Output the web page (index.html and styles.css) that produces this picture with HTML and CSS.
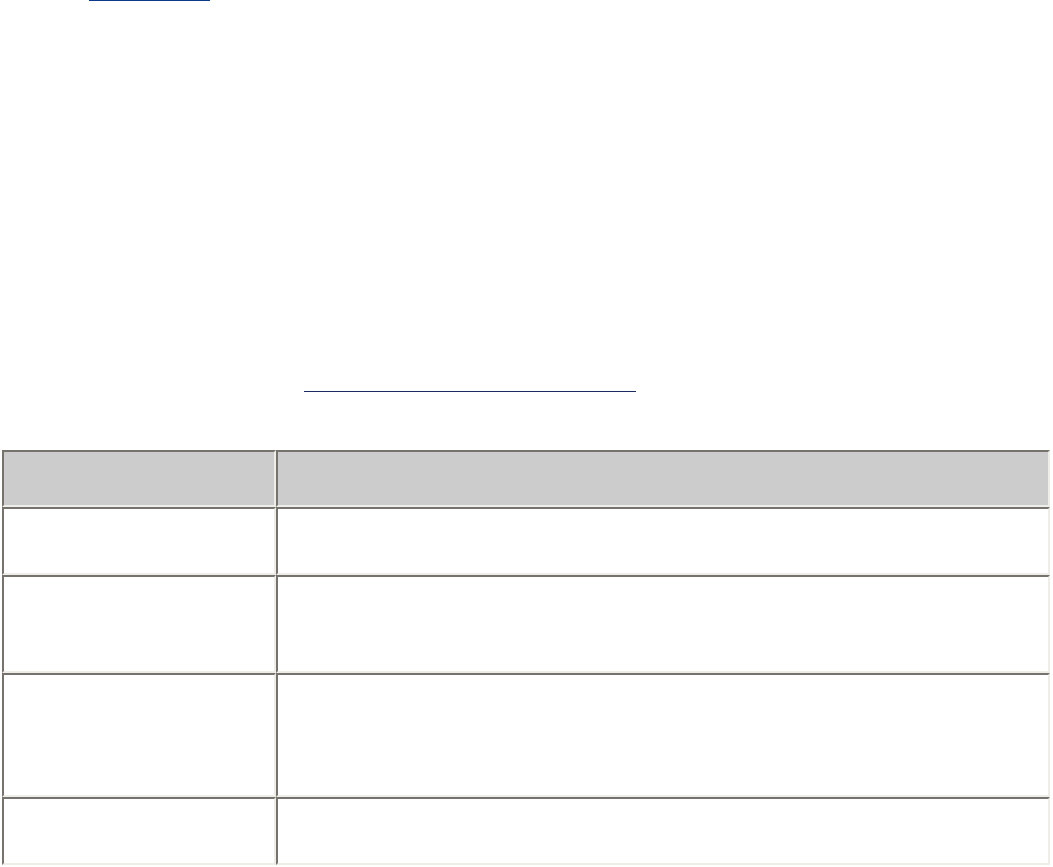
FILE: index.html
```html
<!DOCTYPE html>
<html>
<head>
<meta charset="utf-8">
<link rel="stylesheet" href="styles.css">
</head>
<body>
<div class="top"><a class="toplink" href="#"></a></div>
<div class="mid"><a class="midlink" href="#"></a></div>
<table class="grid">
  <tr class="r1"><th class="c1"></th><th class="c2"></th></tr>
  <tr class="r2"><td class="c1"></td><td class="c2"></td></tr>
  <tr class="r3"><td class="c1"></td><td class="c2"></td></tr>
  <tr class="r4"><td class="c1"></td><td class="c2"></td></tr>
  <tr class="r5"><td class="c1"></td><td class="c2"></td></tr>
</table>
</body>
</html>
```

FILE: styles.css
```css
html, body {
  margin: 0;
  padding: 0;
  background: #ffffff;
  font-family: "Liberation Serif", serif;
}
.top {
  height: 1px;
  padding-left: 89px;
  display: flex;
}
.toplink {
  display: block;
  width: 121px;
  height: 1px;
  background: #0b3a8a;
}
.mid {
  margin-top: 390px;
  padding-left: 304px;
  height: 1px;
  display: flex;
}
.midlink {
  display: block;
  width: 332px;
  height: 1px;
  background: #1b2c62;
}
.grid {
  margin: 58px 0 0 2px;
  width: 1048px;
  border-collapse: separate;
  border-spacing: 0;
  table-layout: fixed;
}
.grid th, .grid td {
  padding: 0;
  border-top: 2px solid #76736e;
  border-left: 2px solid #76736e;
  border-right: 2px solid #eeede8;
  border-bottom: 2px solid #eeede8;
}
.grid th {
  background: #cccccc;
}
.grid td {
  background: #ffffff;
}
.c1 { width: 270px; }
.r1 { height: 57px; }
.r2 { height: 68px; }
.r3 { height: 98px; }
.r4 { height: 124px; }
.r5 { height: 68px; }
```
